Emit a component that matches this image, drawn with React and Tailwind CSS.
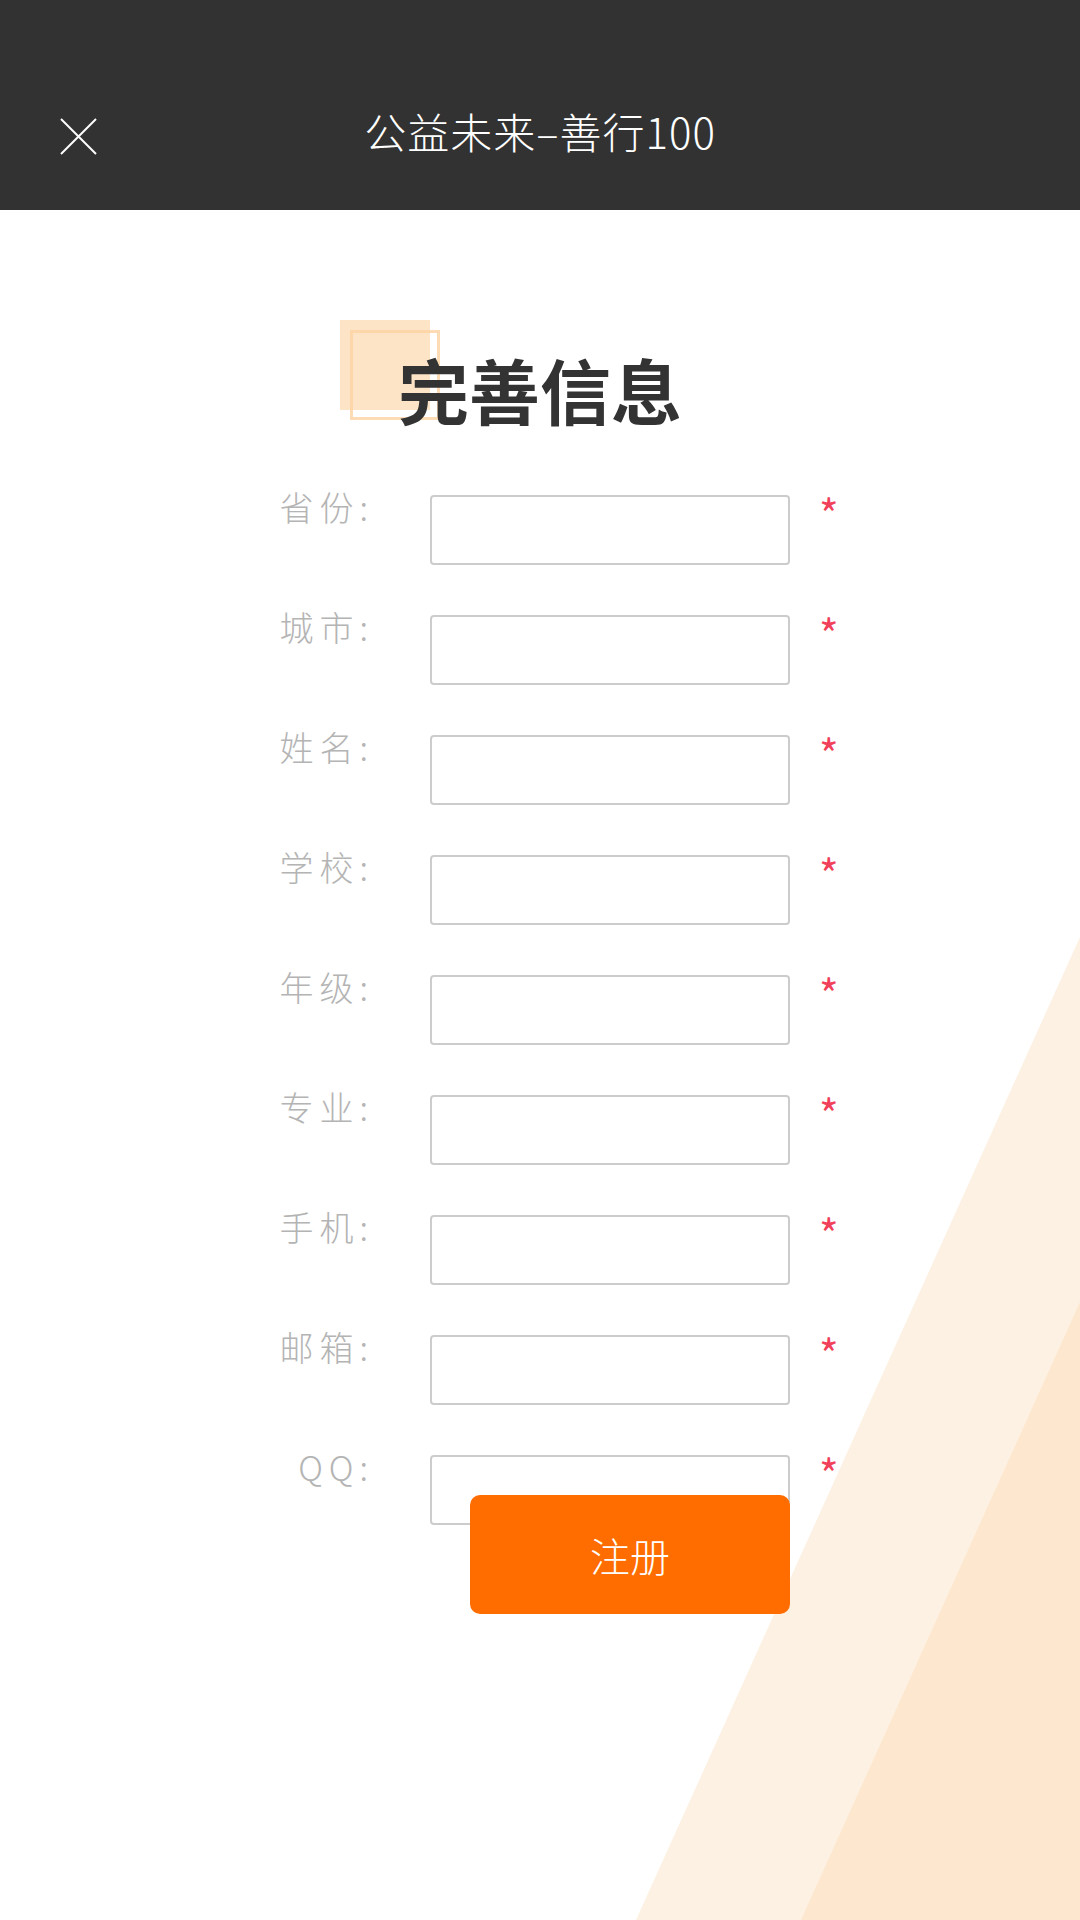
const fields = ["省份", "城市", "姓名", "学校", "年级", "专业", "手机", "邮箱", "QQ"];

const font = { fontFamily: "'Noto Sans CJK SC', 'Noto Sans', sans-serif" };

function CloseIcon() {
  return (
    <svg width="37" height="37" viewBox="0 0 37 37" fill="none" stroke="white" strokeWidth="2">
      <line x1="1" y1="1" x2="36" y2="36" />
      <line x1="36" y1="1" x2="1" y2="36" />
    </svg>
  );
}

function FieldRow({ label }) {
  return (
    <div className="flex items-start">
      <span className="w-[104px] ml-[270px] text-right text-[34px] leading-none font-light tracking-[6px] text-[#b4b4b4]">
        {label}:
      </span>
      <input
        type="text"
        className="ml-[56px] mt-[5px] h-[70px] w-[360px] rounded-[4px] border-2 border-[#cccccc] bg-white outline-none"
      />
      <span className="ml-[29px] mt-[2px] text-[42px] leading-none text-[#f0405a]">*</span>
    </div>
  );
}

export default function App() {
  return (
    <div className="relative w-[1080px] h-[1920px] overflow-hidden bg-white" style={font}>
      <svg className="absolute inset-0" width="1080" height="1920" viewBox="0 0 1080 1920">
        <polygon points="636,1920 1080,937 1080,1920" fill="#fdf1e3" />
        <polygon points="801,1920 1080,1302 1080,1920" fill="#fde8cf" />
      </svg>

      <header className="relative h-[210px] bg-[#323232]">
        <div className="grid grid-cols-3 pt-[110px]">
          <div className="pl-[60px] pt-[8px]">
            <CloseIcon />
          </div>
          <div className="text-center whitespace-nowrap text-[42px] leading-none font-light tracking-[1px] text-white">
            公益未来–善行100
          </div>
          <div />
        </div>
      </header>

      <main className="relative flex flex-col">
        <div className="mt-[143px] flex justify-center">
          <div className="relative">
            <div className="absolute left-[-58px] top-[-33px] h-[90px] w-[90px] bg-[#fde4c6]" />
            <div className="absolute left-[-48px] top-[-23px] h-[90px] w-[90px] border-[3px] border-[#fcd3a3]/80" />
            <h1 className="relative text-[71px] leading-none font-bold text-[#333333]">完善信息</h1>
          </div>
        </div>

        <div className="mt-[66px] flex flex-col gap-[45px]">
          {fields.map((f) => (
            <FieldRow key={f} label={f} />
          ))}
        </div>

        <button
          type="button"
          className="relative ml-[470px] mt-[-30px] h-[119px] w-[320px] rounded-[10px] bg-[#ff6d00] text-[40px] font-light text-white"
        >
          注册
        </button>
      </main>
    </div>
  );
}
